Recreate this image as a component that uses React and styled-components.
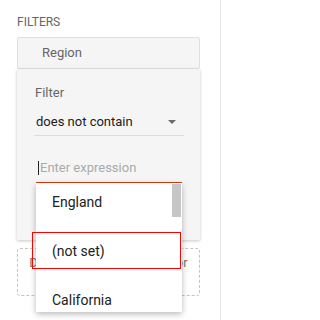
import styled, { createGlobalStyle } from "styled-components";

const GlobalStyle = createGlobalStyle`
  html, body {
    margin: 0;
    padding: 0;
    background: #ffffff;
  }
  body {
    font-family: Roboto, "Liberation Sans", Arial, sans-serif;
  }
`;

const Sidebar = styled.div`
  box-sizing: border-box;
  width: 221px;
  height: 320px;
  padding: 14px 20px 0 17px;
  border-right: 1px solid #e6e6e6;
  overflow: hidden;
`;

const Heading = styled.div`
  font-size: 12px;
  line-height: 16px;
  color: #666;
  text-transform: uppercase;
  margin-bottom: 7px;
`;

const DimensionChip = styled.div`
  height: 30px;
  line-height: 30px;
  padding-left: 24px;
  font-size: 13px;
  color: #666;
  background: #f5f5f5;
  border: 1px solid #e0e0e0;
  border-radius: 2px;
`;

const FilterPanel = styled.div`
  padding: 14px 16px 57px 17px;
  background: #f5f5f5;
  box-shadow: 0 1px 3px rgba(0, 0, 0, 0.22);
`;

const Label = styled.div`
  font-size: 13px;
  line-height: 20px;
  color: #666;
  padding-left: 1px;
`;

const Select = styled.div`
  display: flex;
  align-items: center;
  justify-content: space-between;
  margin-top: 9px;
  padding: 0 8px 3px 2px;
  font-size: 13px;
  line-height: 20px;
  color: #212121;
  border-bottom: 1px solid #dcdcdc;
`;

const Caret = styled.span`
  width: 0;
  height: 0;
  border-left: 4.5px solid transparent;
  border-right: 4.5px solid transparent;
  border-top: 4.5px solid #6b6b6b;
`;

const InputWrap = styled.div`
  position: relative;
  margin: 22px 2px 0;
`;

const Input = styled.div`
  display: flex;
  align-items: center;
  padding: 0 0 4px 2px;
  font-size: 13px;
  line-height: 20px;
  color: #aaa;
  border-bottom: 1px solid #db3a14;
`;

const TextCursor = styled.span`
  width: 1px;
  height: 14px;
  margin-right: 1px;
  background: #222;
`;

const Menu = styled.div`
  position: absolute;
  top: 100%;
  left: 0;
  right: 0;
  height: 129px;
  display: flex;
  background: #fff;
  box-shadow: 0 2px 6px rgba(0, 0, 0, 0.28);
  overflow: hidden;
  z-index: 2;
`;

const Options = styled.div`
  flex: 1;
`;

const Option = styled.div`
  box-sizing: border-box;
  height: 49px;
  padding: 9px 0 0 16px;
  font-size: 14px;
  line-height: 20px;
  color: #212121;
  white-space: nowrap;
`;

const Track = styled.div`
  width: 10px;
  padding: 1px 1px 0 0;
  box-sizing: border-box;
`;

const Thumb = styled.div`
  height: 33px;
  background: #c6c6c6;
`;

const Highlight = styled.div`
  position: absolute;
  top: calc(100% + 49px);
  left: -4px;
  width: 149px;
  height: 37px;
  box-sizing: border-box;
  border: 1px solid #f00;
  z-index: 3;
`;

const DropZone = styled.div`
  box-sizing: border-box;
  height: 48px;
  margin-top: 8px;
  padding-top: 6px;
  font-size: 13px;
  line-height: 16px;
  color: #777;
  text-align: center;
  white-space: nowrap;
  border: 1px dashed #c4c4c4;
  border-radius: 3px;
`;

const options = ["England", "(not set)", "California"];

const App = () => {
  return (
    <>
      <GlobalStyle />
      <Sidebar>
        <Heading>Filters</Heading>
        <DimensionChip>Region</DimensionChip>
        <FilterPanel>
          <Label>Filter</Label>
          <Select>
            does not contain
            <Caret />
          </Select>
          <InputWrap>
            <Input>
              <TextCursor />
              Enter expression
            </Input>
            <Menu>
              <Options>
                {options.map((o) => (
                  <Option key={o}>{o}</Option>
                ))}
              </Options>
              <Track>
                <Thumb />
              </Track>
            </Menu>
            <Highlight />
          </InputWrap>
        </FilterPanel>
        <DropZone>Drop any dimension here or</DropZone>
      </Sidebar>
    </>
  );
};

export default App;
